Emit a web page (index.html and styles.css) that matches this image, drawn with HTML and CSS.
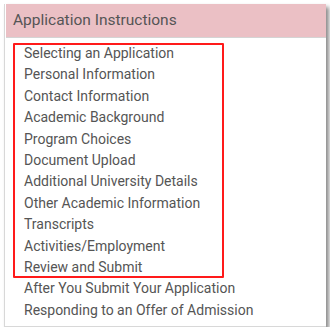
FILE: index.html
```html
<!DOCTYPE html>
<html lang="en">
<head>
    <meta charset="UTF-8">
    <meta name="viewport" content="width=device-width, initial-scale=1.0">
    <title>Application Instructions</title>
    <link rel="stylesheet" href="styles.css">
</head>
<body>
    <div class="panel">
        <div class="panel-header">Application Instructions</div>
        <div class="panel-body">
            <div class="highlight">
                <a href="#">Selecting an Application</a>
                <a href="#">Personal Information</a>
                <a href="#">Contact Information</a>
                <a href="#">Academic Background</a>
                <a href="#">Program Choices</a>
                <a href="#">Document Upload</a>
                <a href="#">Additional University Details</a>
                <a href="#">Other Academic Information</a>
                <a href="#">Transcripts</a>
                <a href="#">Activities/Employment</a>
                <a href="#">Review and Submit</a>
            </div>
            <a href="#">After You Submit Your Application</a>
            <a href="#">Responding to an Offer of Admission</a>
        </div>
    </div>
</body>
</html>
```

FILE: styles.css
```css
body {
    margin: 0;
    background-color: #fff;
    font-family: Roboto, "Liberation Sans", sans-serif;
    color: #555;
}
.panel {
    margin: 4px 0 0 4px;
    width: 320px;
    padding-left: 1px;
    border-left: 1px solid #d8d8d8;
    border-bottom: 1px solid #d8d8d8;
    background-color: #fff;
    box-shadow: 3px 3px 4px rgba(0, 0, 0, 0.45);
}
.panel-header {
    height: 33px;
    line-height: 33px;
    padding-left: 7px;
    background-color: #ebc0c5;
    border-bottom: 1px solid #d4d4d4;
    font-size: 15.5px;
}
.panel-body {
    display: flex;
    flex-direction: column;
    padding: 5px 0 5px 7px;
}
.panel-body a {
    display: block;
    padding-left: 11px;
    color: #555;
    text-decoration: none;
    font-size: 14px;
    line-height: 21.4px;
}
.panel-body a:hover {
    text-decoration: underline;
}
.highlight {
    display: flex;
    flex-direction: column;
    width: 211px;
    outline: 2px solid #ff1a1a;
    outline-offset: -2px;
    border-radius: 1px;
}
```
